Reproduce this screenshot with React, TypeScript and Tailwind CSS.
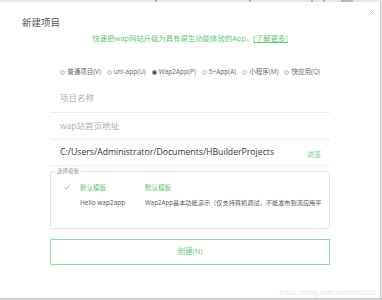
import React from "react";

const font = { fontFamily: '"Open Sans", "Noto Sans CJK SC", sans-serif' };

function Radio({ label, checked }: { label: string; checked?: boolean }) {
  return (
    <div className="flex items-center gap-[2px]">
      <span
        className={
          checked
            ? "flex h-[5px] w-[5px] items-center justify-center rounded-full border border-[#6b7b8c] bg-white"
            : "h-[5px] w-[5px] rounded-full border border-[#c4c4c4] bg-[#eeeeee]"
        }
      >
        {checked ? <span className="h-[3px] w-[3px] rounded-full bg-[#3d4f66]" /> : null}
      </span>
      <span className="text-[6.5px] leading-[10px] text-[#666]">{label}</span>
    </div>
  );
}

export default function App() {
  return (
    <div className="flex h-[300px] w-[382px] flex-col overflow-hidden bg-white" style={font}>
      <div className="flex h-[2px] bg-[#ebe7df]">
        <span className="ml-[155px] w-[2px] bg-[#e49a8a]" />
        <span className="ml-[92px] w-[2px] bg-[#e49a8a]" />
        <span className="ml-[60px] w-[2px] bg-[#b8b4ac]" />
        <span className="ml-[10px] w-[2px] bg-[#b8b4ac]" />
        <span className="ml-[16px] w-[6px] bg-[#a9b8cc]" />
        <span className="w-[6px] bg-[#e0b090]" />
      </div>
      <div className="flex h-[296px]">
        <div className="relative flex w-[380px] flex-col">
          <svg className="absolute left-[368px] top-[7px]" width="7" height="7" viewBox="0 0 7 7">
            <path d="M0.5 0.5 L6.5 6.5 M6.5 0.5 L0.5 6.5" stroke="#cfcfcf" strokeWidth="0.8" />
          </svg>
          <div className="ml-[22px] mt-[15px] text-[9.5px] leading-[12px] text-[#555]">新建项目</div>
          <div className="mt-[4px] text-center text-[7.4px] leading-[10px] text-[#62c877]">
            快速把wap网站升级为具有原生功能体验的App。<span className="underline">[了解更多]</span>
          </div>
          <div className="mx-[50px] mt-[24px] flex justify-center gap-[6px]">
            <Radio label="普通项目(V)" />
            <Radio label="uni-app(U)" />
            <Radio label="Wap2App(P)" checked />
            <Radio label="5+App(A)" />
            <Radio label="小程序(M)" />
            <Radio label="快应用(Q)" />
          </div>
          <div className="mx-[50px] mt-[8px] flex flex-col">
            <div className="flex h-[28px] items-center border-b border-[#ececec] pl-[10px] text-[8.5px] text-[#b0b0b0]">
              项目名称
            </div>
            <div className="flex h-[27px] items-center border-b border-[#ececec] pl-[10px] text-[8.5px] text-[#b0b0b0]">
              wap站首页地址
            </div>
            <div className="flex h-[26px] items-center justify-between border-b border-[#ececec] pl-[10px] pr-[9px]">
              <span className="text-[8.7px] text-[#333]">C:/Users/Administrator/Documents/HBuilderProjects</span>
              <span className="mt-[6px] text-[7px] text-[#6cc97e]">浏览</span>
            </div>
            <fieldset className="mt-[1px] h-[62px] min-w-0 rounded-[2px] border border-[#dfe6ea] pl-[12px] pr-[2px]">
              <legend className="ml-[-8px] px-[2px] text-[5.5px] leading-[8px] text-[#999]">选择模板</legend>
              <div className="mt-[5px] flex h-[15px] items-center text-[6.5px]">
                <svg width="6" height="5" viewBox="0 0 6 5" className="ml-[1px]">
                  <path d="M0.5 2.6 L2.2 4.2 L5.5 0.6" stroke="#5cc46e" strokeWidth="0.9" fill="none" />
                </svg>
                <span className="ml-[10px] w-[65px] text-[#62c877]">默认模板</span>
                <span className="text-[#62c877]">默认模板</span>
              </div>
              <div className="flex h-[15px] items-center whitespace-nowrap text-[#555]">
                <span className="ml-[17px] w-[65px] shrink-0 text-[6.5px]">Hello wap2app</span>
                <span className="text-[6.2px]">Wap2App基本功能演示（仅支持真机调试，不能发布到流应用平</span>
              </div>
            </fieldset>
            <div className="mt-[10px] flex h-[26px] items-center justify-center border border-[#93dba0] text-[7.5px] text-[#62c877]">
              创建(N)
            </div>
          </div>
          <div className="mr-[4px] mt-[23px] text-right text-[7px] leading-[10px] text-[#e4e4e4]">
            https://blog.csdn.net/zhr0835
          </div>
        </div>
        <div className="w-[1px] bg-[#c6c6c6]" />
        <div className="w-[1px] bg-[#e6e6e6]" />
      </div>
      <div className="h-[1px] bg-[#c8c8c8]" />
      <div className="h-[1px] bg-[#d9dde2]" />
    </div>
  );
}
